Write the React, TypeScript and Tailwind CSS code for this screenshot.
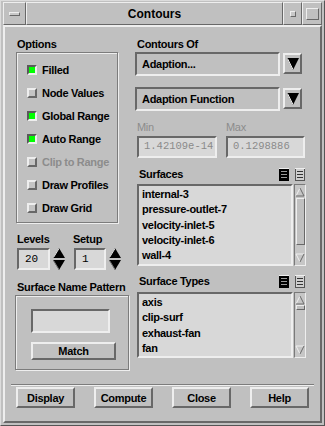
import React from "react";

const raised2 =
  "border-2 border-t-[#eeeeee] border-l-[#eeeeee] border-r-[#686868] border-b-[#686868]";
const sunken2 =
  "border-2 border-t-[#686868] border-l-[#686868] border-r-[#eeeeee] border-b-[#eeeeee]";
const raised1 =
  "border border-t-[#eeeeee] border-l-[#eeeeee] border-r-[#686868] border-b-[#686868]";
const etched =
  "border border-[#7c7c7c] shadow-[inset_1px_1px_0_#eeeeee,1px_1px_0_#eeeeee]";
const label = "text-[11px] font-bold tracking-[-0.3px] leading-[14px] text-black whitespace-nowrap";

function Check({ on, text, disabled }: { on?: boolean; text: string; disabled?: boolean }) {
  return (
    <div className="h-[23px] flex items-center pl-[10px] gap-[5px]">
      <div
        className={
          "w-[10px] h-[10px] " +
          (on
            ? "bg-[#00ff00] border-2 border-t-[#5a5a5a] border-l-[#5a5a5a] border-r-[#eeeeee] border-b-[#eeeeee]"
            : "bg-[#c4c4c4] " + raised2)
        }
      />
      <span className={label + (disabled ? " !text-[#8c8c8c]" : "")}>{text}</span>
    </div>
  );
}

function Spin() {
  return (
    <svg width="12" height="22" viewBox="0 0 12 22" className="ml-[3px]">
      <polygon points="6,0 12,10 0,10" fill="#000" />
      <line x1="6" y1="0.5" x2="0.5" y2="9.5" stroke="#e8e8e8" strokeWidth="1" />
      <polygon points="0,12 12,12 6,22" fill="#000" />
      <line x1="0.5" y1="12.5" x2="6" y2="21.5" stroke="#7a7a7a" strokeWidth="1" />
    </svg>
  );
}

function DropArrow() {
  return (
    <div className={"w-[19px] h-[21px] mt-[1px] ml-[3px] bg-[#c0c0c0] flex items-center justify-center " + raised2}>
      <svg width="12" height="12" viewBox="0 0 12 12">
        <polygon points="0,0 12,0 6,12" fill="#000" />
        <line x1="0.5" y1="0.5" x2="6" y2="11.5" stroke="#e8e8e8" strokeWidth="1" />
      </svg>
    </div>
  );
}

function ListIcons() {
  return (
    <div className="flex gap-[6px] mr-[1px]">
      <svg width="10" height="13" viewBox="0 0 10 13">
        <rect x="0" y="0" width="10" height="13" fill="#000" />
        <line x1="0" y1="0.5" x2="10" y2="0.5" stroke="#eeeeee" />
        <line x1="2" y1="3.5" x2="8" y2="3.5" stroke="#9a9a9a" />
        <line x1="2" y1="6.5" x2="8" y2="6.5" stroke="#9a9a9a" />
        <line x1="2" y1="9.5" x2="8" y2="9.5" stroke="#9a9a9a" />
      </svg>
      <svg width="10" height="13" viewBox="0 0 10 13">
        <rect x="0.5" y="0.5" width="9" height="12" fill="#cfcfcf" stroke="#555" />
        <line x1="0" y1="0.5" x2="10" y2="0.5" stroke="#eeeeee" />
        <line x1="2" y1="3.5" x2="8" y2="3.5" stroke="#333" />
        <line x1="2" y1="6.5" x2="8" y2="6.5" stroke="#333" />
        <line x1="2" y1="9.5" x2="8" y2="9.5" stroke="#333" />
      </svg>
    </div>
  );
}

function ScrollBar({ height, thumbTop, thumbHeight }: { height: number; thumbTop: number; thumbHeight: number }) {
  return (
    <div className="w-[12px] ml-[1px] bg-[#c6c6c6] flex flex-col items-center border border-t-[#7a7a7a] border-l-[#7a7a7a] border-r-[#eeeeee] border-b-[#eeeeee]" style={{ height }}>
      <svg width="10" height="10" viewBox="0 0 10 10" className="mt-[2px]">
        <polygon points="5,1 9,9 1,9" fill="#c6c6c6" />
        <line x1="5" y1="1" x2="1" y2="9" stroke="#f0f0f0" />
        <line x1="5" y1="1" x2="9" y2="9" stroke="#6a6a6a" />
        <line x1="1" y1="9" x2="9" y2="9" stroke="#6a6a6a" />
      </svg>
      <div className={"w-[9px] bg-[#c0c0c0] " + raised1} style={{ marginTop: thumbTop, height: thumbHeight }} />
      <div className="flex-1" />
      <svg width="10" height="10" viewBox="0 0 10 10" className="mb-[2px]">
        <polygon points="1,1 9,1 5,9" fill="#c6c6c6" />
        <line x1="1" y1="1" x2="9" y2="1" stroke="#f0f0f0" />
        <line x1="1" y1="1" x2="5" y2="9" stroke="#f0f0f0" />
        <line x1="9" y1="1" x2="5" y2="9" stroke="#6a6a6a" />
      </svg>
    </div>
  );
}

function ListBox({ items, height, thumbTop, thumbHeight }: { items: string[]; height: number; thumbTop: number; thumbHeight: number }) {
  return (
    <div className="flex ml-[2px]">
      <div className={"w-[156px] bg-[#d8d8d8] pt-[1px] pl-[3px] " + sunken2} style={{ height }}>
        {items.map((it) => (
          <div key={it} className={label + " !leading-[15.3px]"}>
            {it}
          </div>
        ))}
      </div>
      <ScrollBar height={height} thumbTop={thumbTop} thumbHeight={thumbHeight} />
    </div>
  );
}

function Button({ text, w, h }: { text: string; w: number; h: number }) {
  return (
    <div
      className={"bg-[#c0c0c0] flex items-center justify-center " + raised2}
      style={{ width: w, height: h }}
    >
      <span className={label}>{text}</span>
    </div>
  );
}

export default function App() {
  return (
    <div className="w-[325px] h-[426px] bg-[#c0c0c0] flex flex-col border border-t-[#dcdcdc] border-l-[#dcdcdc] border-r-[#555555] border-b-[#555555] px-[2px] pt-[1px] pb-[2px] font-['Liberation_Sans',Arial,sans-serif]">
      {/* title bar */}
      <div className="h-[23px] flex shrink-0">
        <div className={"w-[23px] flex items-center justify-center " + raised1}>
          <div className={"w-[11px] h-[4px] bg-[#c8c8c8] " + raised1} />
        </div>
        <div className={"flex-1 flex items-center justify-center " + raised1}>
          <span className="text-[12px] font-bold text-black leading-none">Contours</span>
        </div>
        <div className={"w-[19px] flex items-center justify-center " + raised1}>
          <div className={"w-[6px] h-[6px] bg-[#c8c8c8] " + raised1} />
        </div>
        <div className={"w-[20px] flex items-center justify-center " + raised1}>
          <div className={"w-[13px] h-[12px] " + raised1} />
        </div>
      </div>

      {/* body */}
      <div className="flex-1 flex flex-col border-2 border-t-[#eeeeee] border-l-[#eeeeee] border-r-[#686868] border-b-[#686868] pl-[10px] pt-[10px]">
        <div className="flex">
          {/* left column */}
          <div className="w-[114px] flex flex-col">
            <div className={label + " pl-[2px]"}>Options</div>
            <div className={"mt-[1px] ml-[1px] w-[102px] h-[171px] pt-[5px] " + etched}>
              <Check on text="Filled" />
              <Check text="Node Values" />
              <Check on text="Global Range" />
              <Check on text="Auto Range" />
              <Check disabled text="Clip to Range" />
              <Check text="Draw Profiles" />
              <Check text="Draw Grid" />
            </div>

            <div className="flex mt-[9px]">
              <div className={label + " pl-[2px] w-[58px]"}>Levels</div>
              <div className={label}>Setup</div>
            </div>
            <div className="flex mt-[2px] pl-[2px]">
              <div className={"w-[33px] h-[22px] bg-[#d8d8d8] flex items-center pl-[6px] " + sunken2}>
                <span className="font-['Liberation_Mono',monospace] text-[11px] text-black">20</span>
              </div>
              <Spin />
              <div className={"ml-[9px] w-[32px] h-[22px] bg-[#d8d8d8] flex items-center pl-[6px] " + sunken2}>
                <span className="font-['Liberation_Mono',monospace] text-[11px] text-black">1</span>
              </div>
              <Spin />
            </div>

            <div className={label + " pl-[2px] mt-[10px]"}>Surface Name Pattern</div>
            <div className={"mt-[1px] w-[114px] h-[75px] flex flex-col pl-[15px] pt-[13px] " + etched}>
              <div className={"w-[79px] h-[24px] bg-[#d8d8d8] " + sunken2} />
              <div className="mt-[9px]">
                <Button text="Match" w={85} h={18} />
              </div>
            </div>
          </div>

          {/* right column */}
          <div className="ml-[6px] w-[171px] flex flex-col">
            <div className={label + " pl-[2px]"}>Contours Of</div>
            <div className="flex mt-[1px]">
              <div className={"w-[145px] h-[24px] flex items-center pl-[5px] " + sunken2}>
                <span className={label}>Adaption...</span>
              </div>
              <DropArrow />
            </div>
            <div className="flex mt-[11px]">
              <div className={"w-[145px] h-[24px] flex items-center pl-[5px] " + sunken2}>
                <span className={label}>Adaption Function</span>
              </div>
              <DropArrow />
            </div>

            <div className="flex mt-[9px]">
              <div className={label + " pl-[2px] w-[91px] !font-normal !text-[#8c8c8c]"}>Min</div>
              <div className={label + " !font-normal !text-[#8c8c8c]"}>Max</div>
            </div>
            <div className="flex mt-[2px] pl-[2px]">
              <div className={"w-[80px] h-[22px] bg-[#d8d8d8] flex items-center pl-[5px] " + sunken2}>
                <span className="font-['Liberation_Mono',monospace] text-[10.5px] text-[#8a8a8a]">1.42109e-14</span>
              </div>
              <div className={"ml-[9px] w-[79px] h-[22px] bg-[#d8d8d8] flex items-center pl-[5px] " + sunken2}>
                <span className="font-['Liberation_Mono',monospace] text-[10.5px] text-[#8a8a8a]">0.1298886</span>
              </div>
            </div>

            <div className="flex items-center justify-between mt-[9px] h-[14px]">
              <div className={label + " pl-[4px]"}>Surfaces</div>
              <ListIcons />
            </div>
            <div className="mt-[3px]">
              <ListBox
                items={["internal-3", "pressure-outlet-7", "velocity-inlet-5", "velocity-inlet-6", "wall-4"]}
                height={82}
                thumbTop={1}
                thumbHeight={47}
              />
            </div>

            <div className="flex items-center justify-between mt-[8px] h-[14px]">
              <div className={label + " pl-[4px]"}>Surface Types</div>
              <ListIcons />
            </div>
            <div className="mt-[4px]">
              <ListBox items={["axis", "clip-surf", "exhaust-fan", "fan"]} height={66} thumbTop={0} thumbHeight={5} />
            </div>
          </div>
        </div>

        {/* separator + buttons */}
        <div className="mt-[14px] ml-[-4px] w-[303px] h-[2px] border-t border-t-[#7c7c7c] border-b border-b-[#eeeeee]" />
        <div className="flex gap-[19px] mt-[1px] pl-[1px]">
          <Button text="Display" w={59} h={21} />
          <Button text="Compute" w={59} h={21} />
          <Button text="Close" w={59} h={21} />
          <Button text="Help" w={59} h={21} />
        </div>
      </div>
    </div>
  );
}
